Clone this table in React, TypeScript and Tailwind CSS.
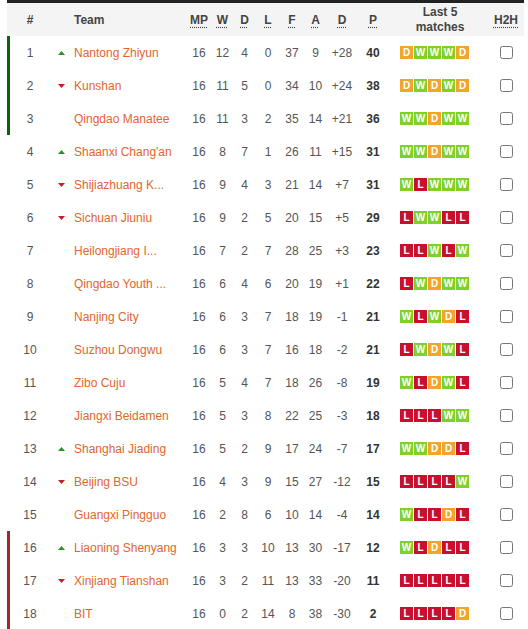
import React from 'react';

type Row = {
  pos: number;
  move?: 'up' | 'down';
  team: string;
  mp: number;
  w: number;
  d: number;
  l: number;
  f: number;
  a: number;
  gd: string;
  p: number;
  form: string;
  zone?: 'promo' | 'releg';
};

const rows: Row[] = [
  { pos: 1, move: 'up', team: 'Nantong Zhiyun', mp: 16, w: 12, d: 4, l: 0, f: 37, a: 9, gd: '+28', p: 40, form: 'DWWWD', zone: 'promo' },
  { pos: 2, move: 'down', team: 'Kunshan', mp: 16, w: 11, d: 5, l: 0, f: 34, a: 10, gd: '+24', p: 38, form: 'DWDWD', zone: 'promo' },
  { pos: 3, team: 'Qingdao Manatee', mp: 16, w: 11, d: 3, l: 2, f: 35, a: 14, gd: '+21', p: 36, form: 'WWDWW', zone: 'promo' },
  { pos: 4, move: 'up', team: "Shaanxi Chang'an", mp: 16, w: 8, d: 7, l: 1, f: 26, a: 11, gd: '+15', p: 31, form: 'WWDWW' },
  { pos: 5, move: 'down', team: 'Shijiazhuang K...', mp: 16, w: 9, d: 4, l: 3, f: 21, a: 14, gd: '+7', p: 31, form: 'WLWWW' },
  { pos: 6, move: 'down', team: 'Sichuan Jiuniu', mp: 16, w: 9, d: 2, l: 5, f: 20, a: 15, gd: '+5', p: 29, form: 'LWWLL' },
  { pos: 7, team: 'Heilongjiang I...', mp: 16, w: 7, d: 2, l: 7, f: 28, a: 25, gd: '+3', p: 23, form: 'LLWLW' },
  { pos: 8, team: 'Qingdao Youth ...', mp: 16, w: 6, d: 4, l: 6, f: 20, a: 19, gd: '+1', p: 22, form: 'LWDWW' },
  { pos: 9, team: 'Nanjing City', mp: 16, w: 6, d: 3, l: 7, f: 18, a: 19, gd: '-1', p: 21, form: 'WLWDL' },
  { pos: 10, team: 'Suzhou Dongwu', mp: 16, w: 6, d: 3, l: 7, f: 16, a: 18, gd: '-2', p: 21, form: 'LWDWL' },
  { pos: 11, team: 'Zibo Cuju', mp: 16, w: 5, d: 4, l: 7, f: 18, a: 26, gd: '-8', p: 19, form: 'WLDWL' },
  { pos: 12, team: 'Jiangxi Beidamen', mp: 16, w: 5, d: 3, l: 8, f: 22, a: 25, gd: '-3', p: 18, form: 'LLLWW' },
  { pos: 13, move: 'up', team: 'Shanghai Jiading', mp: 16, w: 5, d: 2, l: 9, f: 17, a: 24, gd: '-7', p: 17, form: 'WWDDL' },
  { pos: 14, move: 'down', team: 'Beijing BSU', mp: 16, w: 4, d: 3, l: 9, f: 15, a: 27, gd: '-12', p: 15, form: 'LLLLW' },
  { pos: 15, team: 'Guangxi Pingguo', mp: 16, w: 2, d: 8, l: 6, f: 10, a: 14, gd: '-4', p: 14, form: 'WLLDL' },
  { pos: 16, move: 'up', team: 'Liaoning Shenyang', mp: 16, w: 3, d: 3, l: 10, f: 13, a: 30, gd: '-17', p: 12, form: 'WLDLL', zone: 'releg' },
  { pos: 17, move: 'down', team: 'Xinjiang Tianshan', mp: 16, w: 3, d: 2, l: 11, f: 13, a: 33, gd: '-20', p: 11, form: 'LLLLL', zone: 'releg' },
  { pos: 18, team: 'BIT', mp: 16, w: 0, d: 2, l: 14, f: 8, a: 38, gd: '-30', p: 2, form: 'LLLLD', zone: 'releg' },
];

const cols = 'grid-cols-[3px_40px_24px_112px_26px_21px_23px_24px_24px_23px_30px_32px_102px_30px]';

function FormBox({ r }: { r: string }) {
  const bg = r === 'W' ? 'bg-[#80d02b]' : r === 'D' ? 'bg-[#f3a42a]' : 'bg-[#c8102e]';
  return (
    <span className={`w-[13px] h-[13px] flex items-center justify-center text-[10px] font-bold text-white leading-none ${bg}`}>
      {r}
    </span>
  );
}

function Arrow({ dir }: { dir?: 'up' | 'down' }) {
  if (!dir) return null;
  return dir === 'up' ? (
    <svg width="7" height="4" viewBox="0 0 7 4">
      <polygon points="3.5,0 7,4 0,4" fill="#2f8f2f" />
    </svg>
  ) : (
    <svg width="7" height="4" viewBox="0 0 7 4">
      <polygon points="0,0 7,0 3.5,4" fill="#c0202a" />
    </svg>
  );
}

const abbr = 'underline decoration-dotted underline-offset-[3px] decoration-[#444]';

export default function App() {
  return (
    <div className="w-[528px] h-[629px] bg-white overflow-hidden pl-[7px] font-['Liberation_Sans',Arial,sans-serif] text-[12px]">
      <div className="w-[517px]">
        <div className="h-[3px] bg-[#222]" />
        <div className={`grid ${cols} h-[33px] items-center bg-[#f4f4f4] font-bold text-[#444]`}>
          <div />
          <div className="text-center">#</div>
          <div />
          <div>Team</div>
          <div className="text-center"><span className={abbr}>MP</span></div>
          <div className="text-center"><span className={abbr}>W</span></div>
          <div className="text-center"><span className={abbr}>D</span></div>
          <div className="text-center"><span className={abbr}>L</span></div>
          <div className="text-center"><span className={abbr}>F</span></div>
          <div className="text-center"><span className={abbr}>A</span></div>
          <div className="text-center"><span className={abbr}>D</span></div>
          <div className="text-center"><span className={abbr}>P</span></div>
          <div className="text-center leading-[15px]">Last 5<br />matches</div>
          <div className="text-center"><span className={abbr}>H2H</span></div>
        </div>
        {rows.map((row) => (
          <div key={row.pos} className={`grid ${cols} h-[33px] items-center text-[#555]`}>
            <div
              className={`h-full ${
                row.zone === 'promo' ? 'bg-[#0b640b]' : row.zone === 'releg' ? 'bg-[#a8262a]' : ''
              }`}
            />
            <div className="text-center">{row.pos}</div>
            <div className="flex justify-end pr-[9px]">
              <Arrow dir={row.move} />
            </div>
            <div className="text-[#e2662c] whitespace-nowrap">{row.team}</div>
            <div className="text-center">{row.mp}</div>
            <div className="text-center">{row.w}</div>
            <div className="text-center">{row.d}</div>
            <div className="text-center">{row.l}</div>
            <div className="text-center">{row.f}</div>
            <div className="text-center">{row.a}</div>
            <div className="text-center">{row.gd}</div>
            <div className="text-center font-bold text-[#333]">{row.p}</div>
            <div className="flex gap-px pl-[11px]">
              {row.form.split('').map((r, i) => (
                <FormBox key={i} r={r} />
              ))}
            </div>
            <div className="flex justify-center">
              <input type="checkbox" className="w-[13px] h-[13px] m-0" />
            </div>
          </div>
        ))}
      </div>
    </div>
  );
}
